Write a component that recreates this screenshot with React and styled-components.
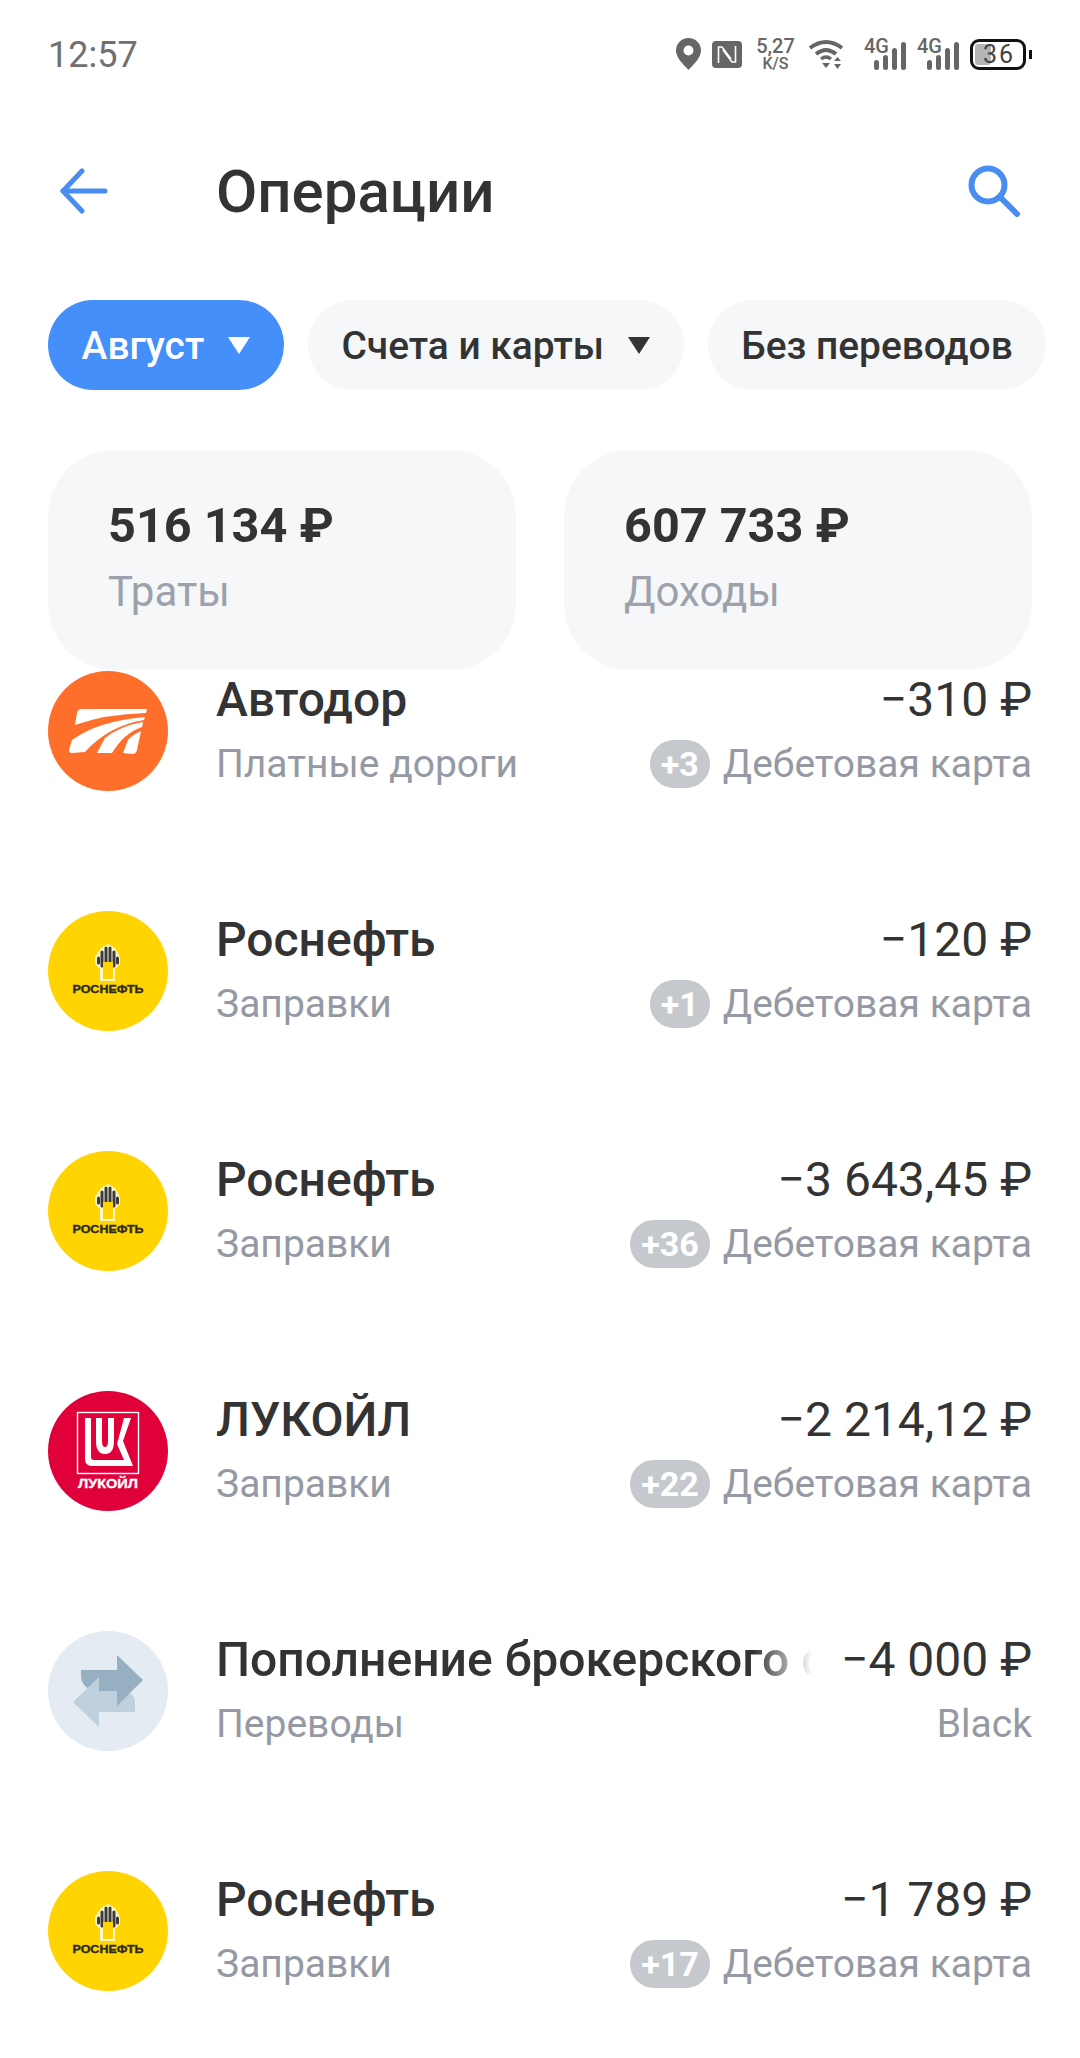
import styled, { createGlobalStyle } from "styled-components";

const GlobalStyle = createGlobalStyle`
  html, body {
    margin: 0;
    padding: 0;
    background: #ffffff;
    font-family: Roboto, "Noto Sans", sans-serif;
  }
`;

const operations = [
  { id: 1, logo: "avtodor", title: "Автодор", category: "Платные дороги", amount: "−310 ₽", badge: "+3", account: "Дебетовая карта" },
  { id: 2, logo: "rosneft", title: "Роснефть", category: "Заправки", amount: "−120 ₽", badge: "+1", account: "Дебетовая карта" },
  { id: 3, logo: "rosneft", title: "Роснефть", category: "Заправки", amount: "−3 643,45 ₽", badge: "+36", account: "Дебетовая карта" },
  { id: 4, logo: "lukoil", title: "ЛУКОЙЛ", category: "Заправки", amount: "−2 214,12 ₽", badge: "+22", account: "Дебетовая карта" },
  { id: 5, logo: "transfer", title: "Пополнение брокерского счета", category: "Переводы", amount: "−4 000 ₽", account: "Black" },
  { id: 6, logo: "rosneft", title: "Роснефть", category: "Заправки", amount: "−1 789 ₽", badge: "+17", account: "Дебетовая карта" },
];

const Avtodor = () => (
  <LogoSvg viewBox="0 0 120 120">
    <circle cx="60" cy="60" r="60" fill="#ff6f2c" />
    <g fill="#ffffff">
      <path d="M29 42 Q30 38 34 38 L99 38 L98 42 Q58 43 27 54 Z" />
      <path d="M21 79 L24 69 Q50 50 97 46 L96 49 Q60 55 37 81 L24 82 Q21 82 21 79 Z" />
      <path d="M49 82 L57 67 Q72 55 95 51 L94 56 Q76 62 64 82 Z" />
      <path d="M75 82 L80 69 Q84 64 93 60 L89 79 Q88 83 84 83 Z" />
    </g>
  </LogoSvg>
);

const Rosneft = () => (
  <LogoSvg viewBox="0 0 120 120">
    <circle cx="60" cy="60" r="60" fill="#ffd400" />
    <path d="M60 33 L67 37 L72 46 L72 53 L67 58 L67 70 L52 70 L52 58 L47 53 L47 46 L53 37 Z" fill="#fff6c4" />
    <g stroke="#3a3a44" strokeWidth="3" strokeLinecap="round">
      <path d="M50.5 47 V52" />
      <path d="M54 41 V55" />
      <path d="M58 37 V52" />
      <path d="M62 37 V52" />
      <path d="M66 41 V55" />
      <path d="M69.5 47 V52" />
    </g>
    <path d="M55 51 H65 V68 H55 Z" fill="#ffd400" />
    <Wordmark x="60" y="82" fontSize="10" fill="#2b2b20" stroke="#2b2b20" strokeWidth="0.35" textLength="71" lengthAdjust="spacingAndGlyphs">
      РОСНЕФТЬ
    </Wordmark>
  </LogoSvg>
);

const Lukoil = () => (
  <LogoSvg viewBox="0 0 120 120">
    <circle cx="60" cy="60" r="60" fill="#e0003a" />
    <rect x="29.5" y="21.5" width="61" height="61" fill="none" stroke="#ffffff" strokeWidth="1.4" />
    <path
      d="M37 27 H43 V66 Q43 69 46 69 H76 L69 53 L76 27 H83 L75 50 L85 75 H44 Q37 75 37 68 Z"
      fill="#ffffff"
    />
    <path d="M48 27 H54 V50 Q54 56 57 56 Q60 56 60 50 V27 H66 V50 Q66 63 57 63 Q48 63 48 50 Z" fill="#ffffff" />
    <Wordmark x="60" y="97" fontSize="12" fill="#ffffff" stroke="#ffffff" strokeWidth="0.3" textLength="60" lengthAdjust="spacingAndGlyphs">
      ЛУКОЙЛ
    </Wordmark>
  </LogoSvg>
);

const Transfer = () => (
  <LogoSvg viewBox="0 0 120 120">
    <circle cx="60" cy="60" r="60" fill="#e4ebf3" />
    <path d="M33 39 H52 V60 H45 Q33 55 33 45 Z" fill="#97b0c1" />
    <path d="M25 71 L51 46 V60 H76 Q87 62 87 72 V81 H51 V96 Z" fill="#bdd0dc" />
    <path d="M51 39 H69 V24 L95 49 L69 75 V60 H51 Z" fill="#97b0c1" />
  </LogoSvg>
);

const logos = { avtodor: Avtodor, rosneft: Rosneft, lukoil: Lukoil, transfer: Transfer };

const Signal = () => (
  <SignalBox>
    <SignalLabel>4G</SignalLabel>
    <svg width="32" height="28" viewBox="0 0 32 28" fill="#666666">
      <rect x="0" y="18" width="5" height="10" rx="2.5" />
      <rect x="9" y="13" width="5" height="15" rx="2.5" />
      <rect x="18" y="6" width="5" height="22" rx="2.5" />
      <rect x="27" y="0" width="5" height="28" rx="2.5" />
    </svg>
  </SignalBox>
);

export default function App() {
  return (
    <Page>
      <GlobalStyle />
      <StatusBar>
        <Time>12:57</Time>
        <StatusIcons>
          <svg width="25" height="32" viewBox="0 0 25 32">
            <path
              fillRule="evenodd"
              d="M12.5 0 C5.5 0 0 5.5 0 12.5 C0 20 8 27 12.5 32 C17 27 25 20 25 12.5 C25 5.5 19.5 0 12.5 0 Z M12.5 7.5 A5 5 0 1 1 12.5 17.5 A5 5 0 1 1 12.5 7.5 Z"
              fill="#666666"
            />
          </svg>
          <svg width="30" height="27" viewBox="0 0 30 27">
            <rect width="30" height="27" rx="4" fill="#666666" />
            <path d="M6.5 22 V6 H10 L19 18 M23.5 5 V21 H20 L11 9" fill="none" stroke="#ffffff" strokeWidth="1.6" />
          </svg>
          <Speed>
            <SpeedValue>5,27</SpeedValue>
            <SpeedUnit>K/S</SpeedUnit>
          </Speed>
          <Wifi width="36" height="30" viewBox="0 0 36 30" fill="none" stroke="#666666" strokeWidth="4">
            <path d="M2 9 Q18 -3 34 9" />
            <path d="M8 15 Q18 7 28 15" />
            <path d="M13 20 Q18 16 23 20" strokeWidth="3.4" />
            <path d="M14 24 H22 L18 29 Z" fill="#666666" stroke="none" />
            <path d="M26 22 L29.5 18 L33 22 Z M26 25 H33 L29.5 30 Z" fill="#666666" stroke="none" />
          </Wifi>
          <Signal />
          <Signal />
          <Battery>
            <BatteryFill />
            <BatteryLevel>36</BatteryLevel>
            <BatteryNub />
          </Battery>
        </StatusIcons>
      </StatusBar>

      <Header>
        <IconButton>
          <svg width="48" height="46" viewBox="0 0 48 46" fill="none" stroke="#4a8df0" strokeWidth="5" strokeLinecap="round" strokeLinejoin="round">
            <path d="M22 3 L3 23 L22 43" />
            <path d="M3 23 H45" />
          </svg>
        </IconButton>
        <Title>Операции</Title>
        <svg width="52" height="52" viewBox="0 0 52 52" fill="none" stroke="#4a8df0" strokeWidth="6" strokeLinecap="round">
          <circle cx="20" cy="20" r="16.5" />
          <path d="M32 32 L49 49" />
        </svg>
      </Header>

      <Chips>
        <Chip $active>
          Август
          <Caret $active />
        </Chip>
        <Chip>
          Счета и карты
          <Caret />
        </Chip>
        <Chip>Без переводов</Chip>
      </Chips>

      <Totals>
        <TotalCard>
          <TotalValue>516 134 ₽</TotalValue>
          <TotalLabel>Траты</TotalLabel>
        </TotalCard>
        <TotalCard>
          <TotalValue>607 733 ₽</TotalValue>
          <TotalLabel>Доходы</TotalLabel>
        </TotalCard>
      </Totals>

      <List>
        {operations.map((op) => {
          const Logo = logos[op.logo];
          return (
            <Row key={op.id}>
              <Logo />
              <RowBody>
                <RowLine>
                  <RowTitle $fade={op.title.length > 20}>{op.title}</RowTitle>
                  <Amount>{op.amount}</Amount>
                </RowLine>
                <RowLine>
                  <Muted>{op.category}</Muted>
                  <Account>
                    {op.badge && <Badge>{op.badge}</Badge>}
                    <Muted>{op.account}</Muted>
                  </Account>
                </RowLine>
              </RowBody>
            </Row>
          );
        })}
      </List>
    </Page>
  );
}

const Page = styled.div`
  width: 1080px;
  height: 2058px;
  overflow: hidden;
  background: #ffffff;
`;

const StatusBar = styled.div`
  height: 108px;
  padding: 0 48px;
  display: flex;
  align-items: center;
  justify-content: space-between;
  box-sizing: border-box;
`;

const Time = styled.span`
  padding-top: 2px;
  font-size: 36px;
  color: #707070;
`;

const StatusIcons = styled.div`
  display: flex;
  align-items: center;
  gap: 11px;
  margin-right: 6px;
`;

const Speed = styled.div`
  width: 37px;
  display: flex;
  flex-direction: column;
  align-items: center;
  margin: 0 3px 0 4px;
  color: #666666;
`;

const SpeedValue = styled.span`
  font-size: 20px;
  line-height: 20px;
  font-weight: 500;
`;

const SpeedUnit = styled.span`
  font-size: 16px;
  line-height: 16px;
  font-weight: 500;
`;

const Wifi = styled.svg`
  margin-right: 9px;
`;

const SignalBox = styled.div`
  position: relative;
  width: 42px;
  height: 32px;
  display: flex;
  justify-content: flex-end;
  align-items: flex-end;
`;

const SignalLabel = styled.span`
  position: absolute;
  left: 0;
  top: -2px;
  font-size: 20px;
  line-height: 20px;
  font-weight: 500;
  color: #666666;
`;

const Battery = styled.div`
  position: relative;
  width: 56px;
  height: 31px;
  border: 3px solid #111111;
  border-radius: 9px;
  box-sizing: border-box;
  display: flex;
  align-items: center;
`;

const BatteryFill = styled.div`
  width: 16px;
  height: 21px;
  margin-left: 2px;
  border-radius: 3px;
  background: #b5b5b5;
`;

const BatteryLevel = styled.span`
  position: absolute;
  left: 10px;
  top: 0;
  font-size: 25px;
  line-height: 25px;
  letter-spacing: 2px;
  color: #444444;
`;

const BatteryNub = styled.div`
  position: absolute;
  right: -9px;
  top: 8px;
  width: 3px;
  height: 9px;
  background: #111111;
`;

const Header = styled.div`
  height: 166px;
  margin-bottom: 26px;
  padding: 0 60px;
  display: flex;
  align-items: center;
`;

const IconButton = styled.div`
  width: 156px;
  display: flex;
`;

const Title = styled.h1`
  flex: 1;
  margin: 0;
  font-size: 60px;
  font-weight: 500;
  color: #333333;
`;

const Chips = styled.div`
  display: flex;
  gap: 24px;
  padding-left: 48px;
`;

const Chip = styled.div`
  height: 90px;
  padding: 0 33.6px;
  border-radius: 45px;
  display: flex;
  align-items: center;
  gap: 24px;
  font-size: 38.9px;
  font-weight: 500;
  white-space: nowrap;
  color: ${(p) => (p.$active ? "#ffffff" : "#333333")};
  background: ${(p) => (p.$active ? "#458ffa" : "#f6f7f9")};
`;

const Caret = styled.span`
  width: 0;
  height: 0;
  border-left: 11px solid transparent;
  border-right: 11px solid transparent;
  border-top: 17px solid ${(p) => (p.$active ? "#ffffff" : "#333333")};
`;

const Totals = styled.div`
  display: grid;
  grid-template-columns: 468px 468px;
  gap: 48px;
  padding: 60px 48px 0;
`;

const TotalCard = styled.div`
  height: 220px;
  padding: 46px 60px 0;
  border-radius: 66px;
  background: #f6f7f9;
  box-sizing: border-box;
`;

const TotalValue = styled.div`
  font-size: 48.6px;
  line-height: 60px;
  font-weight: 700;
  color: #333333;
`;

const TotalLabel = styled.div`
  margin-top: 11px;
  font-size: 42px;
  line-height: 50px;
  color: #9ca1ab;
`;

const List = styled.div`
  padding: 1px 48px 0;
`;

const Row = styled.div`
  height: 240px;
  display: flex;
  gap: 48px;
`;

const LogoSvg = styled.svg`
  width: 120px;
  height: 120px;
  flex-shrink: 0;
`;

const Wordmark = styled.text`
  font-family: "Liberation Sans", sans-serif;
  font-weight: 700;
  text-anchor: middle;
`;

const RowBody = styled.div`
  flex: 1;
  min-width: 0;
  padding-top: 1px;
  display: flex;
  flex-direction: column;
  gap: 11px;
`;

const RowLine = styled.div`
  display: flex;
  justify-content: space-between;
  align-items: center;
  height: 54px;
`;

const RowTitle = styled.div`
  flex: 1;
  min-width: 0;
  overflow: hidden;
  white-space: nowrap;
  margin-right: 28px;
  font-size: 48px;
  font-weight: 500;
  color: #333333;
  ${(p) =>
    p.$fade &&
    `mask-image: linear-gradient(to right, #000 90%, transparent 100%);`}
`;

const Amount = styled.div`
  font-size: 48px;
  white-space: nowrap;
  color: #333333;
`;

const Muted = styled.span`
  font-size: 39px;
  color: #9599a3;
`;

const Account = styled.div`
  display: flex;
  align-items: center;
  gap: 13px;
`;

const Badge = styled.span`
  height: 48px;
  min-width: 60px;
  padding: 0 11px;
  border-radius: 24px;
  box-sizing: border-box;
  display: flex;
  align-items: center;
  justify-content: center;
  font-size: 34px;
  font-weight: 700;
  color: #ffffff;
  background: #c5c9ce;
`;
